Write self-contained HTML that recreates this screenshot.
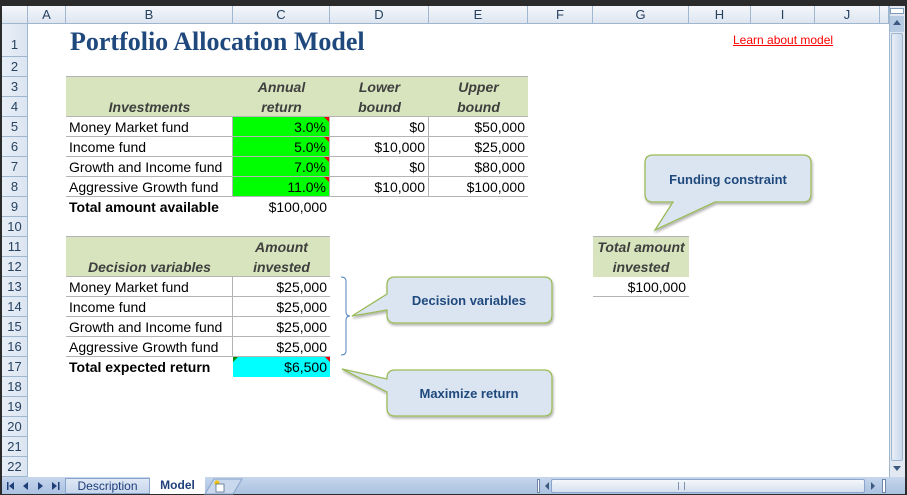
<!DOCTYPE html>
<html><head><meta charset="utf-8"><style>
*{margin:0;padding:0;box-sizing:border-box}
body{width:907px;height:495px;overflow:hidden;background:#fff;position:relative;font-family:"Liberation Sans",sans-serif;font-size:14px;color:#000}
.a{position:absolute;white-space:nowrap}
.ch{position:absolute;top:6px;height:18px;background:linear-gradient(#f4f7fb,#dde5f0);border-right:1px solid #9eb6ce;border-bottom:1px solid #9eb6ce;text-align:center;font-size:13px;line-height:17px;color:#27415f}
.rh{position:absolute;left:2px;width:26px;background:linear-gradient(90deg,#e8eef7,#dbe5f1);border-bottom:1px solid #9eb6ce;border-right:1px solid #9eb6ce;font-size:13px;text-align:center;color:#27415f}
.c{position:absolute;height:20px;line-height:21px;padding:0 3px;white-space:nowrap}
.r{text-align:right}
.hdr{background:#d7e4bd;font-weight:bold;font-style:italic;color:#3f3f3f;text-align:center}
.bb{border-bottom:1px solid #b4b4b4}
.br{border-right:1px solid #b4b4b4}
.b{font-weight:bold}
.tri{position:absolute;right:0;top:0;width:0;height:0;border-top:5px solid #e00;border-left:5px solid transparent}
</style></head><body>
<div class="a" style="left:0;top:0;width:907px;height:6px;background:#2b2b2b"></div>
<div class="a" style="left:0;top:0;width:2px;height:495px;background:#2b2b2b"></div>
<div class="a" style="left:905px;top:0;width:2px;height:495px;background:#2b2b2b"></div>
<div class="ch" style="left:2px;width:26px"></div>
<div class="ch" style="left:28px;width:38px">A</div>
<div class="ch" style="left:66px;width:167px">B</div>
<div class="ch" style="left:233px;width:97px">C</div>
<div class="ch" style="left:330px;width:99px">D</div>
<div class="ch" style="left:429px;width:99px">E</div>
<div class="ch" style="left:528px;width:65px">F</div>
<div class="ch" style="left:593px;width:96px">G</div>
<div class="ch" style="left:689px;width:62px">H</div>
<div class="ch" style="left:751px;width:64px">I</div>
<div class="ch" style="left:815px;width:65px">J</div>
<div class="ch" style="left:880px;width:9px"></div>
<div class="rh" style="top:24px;height:33px;line-height:42px">1</div>
<div class="rh" style="top:57px;height:20px;line-height:20px">2</div>
<div class="rh" style="top:77px;height:20px;line-height:20px">3</div>
<div class="rh" style="top:97px;height:20px;line-height:20px">4</div>
<div class="rh" style="top:117px;height:20px;line-height:20px">5</div>
<div class="rh" style="top:137px;height:20px;line-height:20px">6</div>
<div class="rh" style="top:157px;height:20px;line-height:20px">7</div>
<div class="rh" style="top:177px;height:20px;line-height:20px">8</div>
<div class="rh" style="top:197px;height:20px;line-height:20px">9</div>
<div class="rh" style="top:217px;height:20px;line-height:20px">10</div>
<div class="rh" style="top:237px;height:20px;line-height:20px">11</div>
<div class="rh" style="top:257px;height:20px;line-height:20px">12</div>
<div class="rh" style="top:277px;height:20px;line-height:20px">13</div>
<div class="rh" style="top:297px;height:20px;line-height:20px">14</div>
<div class="rh" style="top:317px;height:20px;line-height:20px">15</div>
<div class="rh" style="top:337px;height:20px;line-height:20px">16</div>
<div class="rh" style="top:357px;height:20px;line-height:20px">17</div>
<div class="rh" style="top:377px;height:20px;line-height:20px">18</div>
<div class="rh" style="top:397px;height:20px;line-height:20px">19</div>
<div class="rh" style="top:417px;height:20px;line-height:20px">20</div>
<div class="rh" style="top:437px;height:20px;line-height:20px">21</div>
<div class="rh" style="top:457px;height:20px;line-height:20px">22</div>

<div class="a" style="left:70px;top:27px;font-family:'Liberation Serif',serif;font-weight:bold;font-size:26px;color:#1f497d">Portfolio Allocation Model</div>
<div class="a" style="left:733px;top:33px;font-size:12px;color:#f00;text-decoration:underline">Learn about model</div>

<div class="a hdr bb" style="left:66px;top:77px;width:167px;height:40px"><div style="position:absolute;bottom:1px;width:100%">Investments</div></div>
<div class="a hdr bb" style="left:233px;top:77px;width:97px;height:40px;line-height:20px">Annual<br>return</div>
<div class="a hdr bb" style="left:330px;top:77px;width:99px;height:40px;line-height:20px">Lower<br>bound</div>
<div class="a hdr bb" style="left:429px;top:77px;width:99px;height:40px;line-height:20px">Upper<br>bound</div>
<div class="a" style="left:66px;top:76px;width:462px;height:1px;background:#b4b4b4"></div>

<div class="c bb br" style="left:66px;top:117px;width:167px">Money Market fund</div>
<div class="c bb br r" style="left:233px;top:117px;width:97px;background:#0f0">3.0%<i class="tri"></i></div>
<div class="c bb br r" style="left:330px;top:117px;width:99px">$0</div>
<div class="c bb r" style="left:429px;top:117px;width:99px">$50,000</div>

<div class="c bb br" style="left:66px;top:137px;width:167px">Income fund</div>
<div class="c bb br r" style="left:233px;top:137px;width:97px;background:#0f0">5.0%<i class="tri"></i></div>
<div class="c bb br r" style="left:330px;top:137px;width:99px">$10,000</div>
<div class="c bb r" style="left:429px;top:137px;width:99px">$25,000</div>

<div class="c bb br" style="left:66px;top:157px;width:167px">Growth and Income fund</div>
<div class="c bb br r" style="left:233px;top:157px;width:97px;background:#0f0">7.0%<i class="tri"></i></div>
<div class="c bb br r" style="left:330px;top:157px;width:99px">$0</div>
<div class="c bb r" style="left:429px;top:157px;width:99px">$80,000</div>

<div class="c bb br" style="left:66px;top:177px;width:167px">Aggressive Growth fund</div>
<div class="c bb br r" style="left:233px;top:177px;width:97px;background:#0f0">11.0%<i class="tri"></i></div>
<div class="c bb br r" style="left:330px;top:177px;width:99px">$10,000</div>
<div class="c bb r" style="left:429px;top:177px;width:99px">$100,000</div>

<div class="c b" style="left:66px;top:197px;width:167px">Total amount available</div>
<div class="c r" style="left:233px;top:197px;width:97px">$100,000</div>

<div class="a" style="left:66px;top:236px;width:264px;height:1px;background:#b4b4b4"></div>
<div class="a hdr bb" style="left:66px;top:237px;width:167px;height:40px"><div style="position:absolute;bottom:1px;width:100%">Decision variables</div></div>
<div class="a hdr bb" style="left:233px;top:237px;width:97px;height:40px;line-height:20px">Amount<br>invested</div>
<div class="c bb br" style="left:66px;top:277px;width:167px">Money Market fund</div>
<div class="c bb r" style="left:233px;top:277px;width:97px">$25,000</div>
<div class="c bb br" style="left:66px;top:297px;width:167px">Income fund</div>
<div class="c bb r" style="left:233px;top:297px;width:97px">$25,000</div>
<div class="c bb br" style="left:66px;top:317px;width:167px">Growth and Income fund</div>
<div class="c bb r" style="left:233px;top:317px;width:97px">$25,000</div>
<div class="c bb br" style="left:66px;top:337px;width:167px">Aggressive Growth fund</div>
<div class="c bb r" style="left:233px;top:337px;width:97px">$25,000</div>
<div class="c b" style="left:66px;top:357px;width:167px">Total expected return</div>
<div class="c r" style="left:233px;top:357px;width:97px;background:#0ff">$6,500<i class="tri"></i><i style="position:absolute;left:0;top:0;border-top:5px solid #080;border-right:5px solid transparent"></i></div>

<div class="a" style="left:593px;top:236px;width:96px;height:1px;background:#b4b4b4"></div>
<div class="a hdr" style="left:593px;top:237px;width:96px;height:40px;line-height:20px">Total amount<br>invested</div>
<div class="c bb r" style="left:593px;top:277px;width:96px">$100,000</div>

<svg class="a" style="left:0;top:0" width="907" height="495">
<defs><filter id="s" x="-10%" y="-10%" width="130%" height="140%"><feDropShadow dx="1" dy="2" stdDeviation="1.2" flood-color="#000" flood-opacity="0.3"/></filter></defs>
<g fill="#dbe5f1" stroke="#9bbb59" stroke-width="1.3" filter="url(#s)">
<path d="M653 155 H803 Q811 155 811 163 V194 Q811 202 803 202 H715 L655 230 L673 202 H653 Q645 202 645 194 V163 Q645 155 653 155 Z"/>
<path d="M395 277 H544 Q552 277 552 285 V315 Q552 323 544 323 H395 Q387 323 387 315 V310 L352 316 L387 294 V285 Q387 277 395 277 Z"/>
<path d="M395 370 H544 Q552 370 552 378 V408 Q552 416 544 416 H395 Q387 416 387 408 V392 L342 369 L387 379 V378 Q387 370 395 370 Z"/>
</g>
<path d="M341 277 Q346 277 346 281 V312 Q346 316 350 316 Q346 316 346 320 V351 Q346 355 341 355" fill="none" stroke="#4f81bd" stroke-width="1"/>
<g font-family="Liberation Sans,sans-serif" font-weight="bold" font-size="13" fill="#1f497d" text-anchor="middle">
<text x="728" y="184">Funding constraint</text>
<text x="469" y="305">Decision variables</text>
<text x="469" y="398">Maximize return</text>
</g>
</svg>

<div class="a" style="left:889px;top:6px;width:16px;height:471px;background:#e1e8f2;border-left:1px solid #9eb6ce"></div>
<div class="a" style="left:890px;top:8px;width:14px;height:6px;border:1px solid #7f9db9;background:#fff"></div>
<div class="a" style="left:890px;top:16px;width:14px;height:16px;background:#b7cbe3"></div>
<div class="a" style="left:893px;top:20px;border-left:4px solid transparent;border-right:4px solid transparent;border-bottom:5px solid #3c5a80"></div>
<div class="a" style="left:891px;top:33px;width:12px;height:428px;background:linear-gradient(90deg,#e8eef7,#c9d8ec);border:1px solid #9eb6ce;border-radius:2px"></div>
<div class="a" style="left:893px;top:466px;border-left:4px solid transparent;border-right:4px solid transparent;border-top:5px solid #3c5a80"></div>

<div class="a" style="left:2px;top:477px;width:903px;height:18px;background:linear-gradient(#c6d6ec,#a9c0e0)"></div>
<div class="a" style="left:2px;top:494px;width:903px;height:1px;background:#2b2b2b"></div>
<svg class="a" style="left:4px;top:479px" width="60" height="14" fill="#1f3f7a">
<rect x="3" y="3" width="1.5" height="8"/><path d="M10 3 L5 7 L10 11Z"/>
<path d="M24 3 L19 7 L24 11Z"/><path d="M34 3 L39 7 L34 11Z"/>
<path d="M48 3 L53 7 L48 11Z"/><rect x="54" y="3" width="1.5" height="8"/>
</svg>
<div class="a" style="left:65px;top:478px;width:85px;height:16px;background:linear-gradient(#dfe8f5,#c6d6ec);border:1px solid #8aa5cb;font-size:12px;line-height:15px;text-align:center;color:#1f3f7a">Description</div>
<div class="a" style="left:150px;top:477px;width:55px;height:17px;background:#fff;font-size:12px;font-weight:bold;line-height:17px;text-align:center;color:#1f3f7a">Model</div>
<svg class="a" style="left:200px;top:477px" width="48" height="18"><path d="M5 17 L14 2 H42 L33 17Z" fill="#c9d8ec" stroke="#8aa5cb"/><circle cx="17" cy="6" r="2.5" fill="#f5c400"/><rect x="16" y="7" width="8" height="8" fill="#fff" stroke="#5a6e8c" stroke-width=".8"/></svg>
<div class="a" style="left:537px;top:479px;width:3px;height:14px;background:#fff;border:1px solid #6f86a8"></div>
<div class="a" style="left:545px;top:482px;border-top:4px solid transparent;border-bottom:4px solid transparent;border-right:4px solid #3c5a80"></div>
<div class="a" style="left:551px;top:479px;width:314px;height:14px;background:linear-gradient(#f4f7fb,#d6e0ee);border:1px solid #8aa5cb;border-radius:2px"></div>
<div class="a" style="left:678px;top:482px;width:7px;height:8px;border-left:1px solid #7d93b4;border-right:1px solid #7d93b4"></div>
<div class="a" style="left:871px;top:482px;border-top:4px solid transparent;border-bottom:4px solid transparent;border-left:4px solid #3c5a80"></div>
<div class="a" style="left:882px;top:479px;width:4px;height:14px;background:#fff;border:1px solid #6f86a8"></div>
</body></html>
